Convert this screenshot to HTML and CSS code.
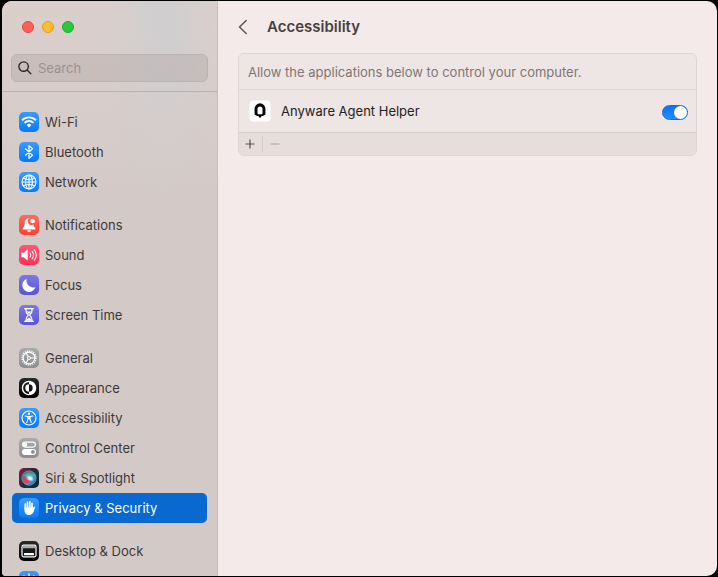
FILE: index.html
```html
<!DOCTYPE html>
<html lang="en">
<head>
<meta charset="utf-8">
<title>Accessibility</title>
<link rel="stylesheet" href="styles.css">
</head>
<body>
<div class="window">
  <aside class="sidebar">
    <div class="lights">
      <button class="light close" aria-label="Close"></button>
      <button class="light minimize" aria-label="Minimize"></button>
      <button class="light maximize" aria-label="Zoom"></button>
    </div>
    <label class="search">
      <svg width="14" height="14" viewBox="0 0 14 14" fill="none" stroke="#2c2a2a" stroke-width="1.4" stroke-linecap="round"><circle cx="5.6" cy="5.6" r="4.7"/><path d="M9.1 9.1l3.7 3.7"/></svg>
      <input type="search" placeholder="Search" aria-label="Search">
    </label>
    <nav class="list">
      <div class="group">
        <a class="item" href="#"><svg class="icon blue" viewBox="0 0 20 20" fill="none" stroke="#fff" stroke-width="1.9"><path d="M3 8.2a10 10 0 0 1 14 0M5.5 10.9a6.4 6.4 0 0 1 9 0"/><path d="M10 15.4l-2.3-2.5a3.4 3.4 0 0 1 4.6 0z" fill="#fff" stroke="none"/></svg>Wi-Fi</a>
        <a class="item" href="#"><svg class="icon blue" viewBox="0 0 20 20" fill="none" stroke="#fff" stroke-width="1.2" stroke-linejoin="round" stroke-linecap="round"><path d="M6.5 6.8l7 6.4-3.500 3.200V3.600l3.500 3.200-7 6.400"/></svg>Bluetooth</a>
        <a class="item" href="#"><svg class="icon blue" viewBox="0 0 20 20" fill="none" stroke="#fff" stroke-width="1.1"><circle cx="10" cy="10" r="7"/><ellipse cx="10" cy="10" rx="3.4" ry="7"/><path d="M10 3v14M3 10h14M4.300 6.200c3.500 1.600 7.900 1.600 11.400 0M4.300 13.800c3.500-1.600 7.900-1.600 11.400 0"/></svg>Network</a>
      </div>
      <div class="group">
        <a class="item" href="#"><svg class="icon red" viewBox="0 0 20 20" fill="#fff"><path d="M10.500 3.300C7.500 3 5.800 5 5.700 7.800c-.1 3-.5 3.900-1.900 5.200-.6.600-.3 1.400.5 1.400h11.400c.8 0 1.100-.8.500-1.400-1-1-1.600-1.800-1.800-3.500a3.400 3.400 0 0 1-3.900-6.200zM8 15.200h4a2 2 0 0 1-4 0z"/><circle cx="13.600" cy="6" r="2.300"/></svg>Notifications</a>
        <a class="item" href="#"><svg class="icon pink" viewBox="0 0 20 20" fill="none" stroke="#fff" stroke-width="1.1" stroke-linecap="round"><path d="M2.700 8v4h2l3.700 3.100V4.900L4.700 8z" fill="#fff" stroke-linejoin="round" stroke-width=".6"/><path d="M11 8a3.500 3.500 0 0 1 0 4M13.200 6.300a6.200 6.200 0 0 1 0 7.400M15.400 4.700a9 9 0 0 1 0 10.600"/></svg>Sound</a>
        <a class="item" href="#"><svg class="icon indigo" viewBox="0 0 20 20" fill="#fff"><path d="M7.700 3.900A6.700 6.700 0 1 0 16.400 12.300 7 7 0 0 1 7.700 3.900z"/></svg>Focus</a>
        <a class="item" href="#"><svg class="icon indigo" viewBox="0 0 20 20" fill="none" stroke="#fff" stroke-width="1.3" stroke-linecap="round"><path d="M5.600 3.700h8.800M5.600 16.300h8.800M6.800 4c0 3.500.8 4.400 2.300 5.500v1c-1.500 1.100-2.300 2-2.300 5.500M13.200 4c0 3.500-.8 4.400-2.300 5.500v1c1.500 1.100 2.300 2 2.300 5.500"/><path d="M7.600 6.600h4.800L10 9zM7.200 15.700c.2-1.700 1.600-2.300 2.800-3.200 1.200.9 2.600 1.500 2.800 3.200z" fill="#fff" stroke="none"/></svg>Screen Time</a>
      </div>
      <div class="group">
        <a class="item" href="#"><svg class="icon gray" viewBox="0 0 20 20" fill="none" stroke="#fff"><circle cx="10" cy="10" r="7" stroke-width="1.400" stroke-dasharray="1.200 1"/><circle cx="10" cy="10" r="5.900" stroke-width="1.200"/><path d="M11.500 10H16M9.200 8.700L7 4.900M9.200 11.300L7 15.100" stroke-width="1.100"/><circle cx="10" cy="10" r="1.500" stroke-width="1"/></svg>General</a>
        <a class="item" href="#"><svg class="icon black" viewBox="0 0 20 20"><circle cx="10" cy="10" r="6.600" fill="none" stroke="#fff" stroke-width="1.400"/><path d="M10 3.400a6.600 6.600 0 0 1 0 13.200v-2.900a3.700 3.700 0 0 0 0-7.400zM10 6.300a3.700 3.700 0 0 0 0 7.400z" fill="#fff"/></svg>Appearance</a>
        <a class="item" href="#"><svg class="icon blue" viewBox="0 0 20 20" fill="none" stroke="#fff" stroke-linecap="round"><circle cx="10" cy="10" r="7" stroke-width="1.2"/><circle cx="10" cy="5.800" r="1.200" fill="#fff" stroke="none"/><path d="M6.300 8l2.600.6v2.500L7.800 14.700M13.700 8l-2.600.6v2.500l1.100 3.600M9 8.600h2" stroke-width="1.100" stroke-linejoin="round"/><path d="M8.900 8.400h2.200v3H8.900z" fill="#fff" stroke="none"/></svg>Accessibility</a>
        <a class="item" href="#"><svg class="icon gray" viewBox="0 0 20 20"><rect x="3.600" y="4.100" width="12.800" height="5" rx="2.500" fill="none" stroke="#fff" stroke-width="1.100"/><circle cx="6.100" cy="6.600" r="2.200" fill="#fff"/><rect x="3" y="10.900" width="14" height="6" rx="3" fill="#fff"/><circle cx="13.900" cy="13.900" r="1.900" fill="#8f8f93"/></svg>Control Center</a>
        <a class="item" href="#"><svg class="icon siri" viewBox="0 0 20 20"><defs><linearGradient id="orb" x1="0" y1="0" x2="1" y2="1"><stop offset="0" stop-color="#5f6a78"/><stop offset=".4" stop-color="#56808e"/><stop offset=".6" stop-color="#4a9fc2"/><stop offset="1" stop-color="#2c58b0"/></linearGradient><radialGradient id="glow"><stop offset="0" stop-color="#fff"/><stop offset=".4" stop-color="#eafcff" stop-opacity=".8"/><stop offset="1" stop-color="#afd" stop-opacity="0"/></radialGradient></defs><circle cx="10" cy="10" r="7.500" fill="url(#orb)"/><path d="M4 8c3-4 9-4 12 0-4-1-5 4-7 2.500S6 7 4 8z" fill="#44d4bd" opacity=".55"/><path d="M3.500 12c3-4 6-2 8 0-1 4-6 5-8 0z" fill="#e33b67" opacity=".9"/><ellipse cx="11" cy="10.300" rx="4.600" ry="3.200" transform="rotate(25 11 10.300)" fill="url(#glow)"/><circle cx="10" cy="10" r="7.300" fill="none" stroke="#8fb0bd" stroke-opacity=".5" stroke-width=".6"/></svg>Siri &amp; Spotlight</a>
        <a class="item selected" href="#" aria-current="page"><svg class="icon blue" viewBox="0 0 20 20" fill="none" stroke="#fff" stroke-linecap="round" stroke-width="1.700"><path d="M6.300 6v5M8.500 4.300v6M10.800 3.800v6M13 5.400v6M15.300 9.400l-1.800 3.800"/><path d="M5.500 9.500h8.300v2.700l1.600-1c-.8 3.200-2.200 5.800-5.100 5.800-3.200 0-4.800-2.200-4.800-5.100z" fill="#fff" stroke="none"/></svg>Privacy &amp; Security</a>
      </div>
      <div class="group">
        <a class="item" href="#"><svg class="icon black" viewBox="0 0 20 20"><rect x="3" y="4.200" width="14" height="11.600" rx="1.500" fill="#171717" stroke="#fff" stroke-width="1.200"/><path d="M4 5h12v2.200H4z" fill="#aaa"/><rect x="5" y="12" width="10" height="2.300" rx=".6" fill="#fff"/></svg>Desktop &amp; Dock</a>
        <a class="item" href="#" aria-label="Displays"><svg class="icon blue" viewBox="0 0 20 20" fill="none" stroke="#fff" stroke-width="1.3" stroke-linecap="round"><circle cx="10" cy="10" r="3.400" fill="#fff"/><path d="M10 3v1.500M10 15.500V17M3 10h1.500M15.500 10H17M5 5l1.100 1.100M13.900 13.900L15 15M15 5l-1.100 1.100M6.100 13.900L5 15"/></svg></a>
      </div>
    </nav>
  </aside>
  <main class="content">
    <header class="title">
      <button class="back" aria-label="Back"><svg width="10" height="16" viewBox="0 0 10 16" fill="none" stroke="#5f5959" stroke-width="1.6" stroke-linecap="round" stroke-linejoin="round"><path d="M8.200 1.500L1.500 8l6.700 6.500"/></svg></button>
      <h1>Accessibility</h1>
    </header>
    <section class="panel">
      <p class="hint">Allow the applications below to control your computer.</p>
      <div class="app">
        <svg class="app-icon" viewBox="0 0 22 22"><rect x="0.500" y="0.500" width="21" height="21" rx="4" fill="#fff"/><path d="M5.600 14.500V8.700a5.400 5.400 0 0 1 10.800 0v5.800l-2.500 1.500h-1.200L11 18.200 9.300 16H8.100zM8.500 9v4.500l.8.800h3.400l.8-.8V9a2.500 2.500 0 0 0-5 0z" fill="#080808" fill-rule="evenodd"/></svg>
        <label for="helper">Anyware Agent Helper</label>
        <input class="switch" id="helper" type="checkbox" role="switch" checked>
      </div>
      <footer class="actions">
        <button aria-label="Add"><svg width="10" height="10" viewBox="0 0 10 10" stroke="#544f4f" stroke-width="1.2"><path d="M.5 5h9M5 .5v9"/></svg></button>
        <span class="split"></span>
        <button aria-label="Remove" disabled><svg width="10" height="10" viewBox="0 0 10 10" stroke="#aaa2a2" stroke-width="1.2"><path d="M.5 5h9"/></svg></button>
      </footer>
    </section>
  </main>
</div>
</body>
</html>
```
FILE: styles.css
```css
* {
  box-sizing: border-box;
}

body {
  margin: 0;
  height: 100vh;
  padding: 1px 1px 1px 2px;
  background: #000;
  font: 13px/16px Inter, "Liberation Sans", sans-serif;
  color: #3d3939;
}

button {
  padding: 0;
  border: 0;
  background: none;
}

svg {
  display: block;
  flex: none;
}

.window {
  display: flex;
  height: 100%;
  overflow: hidden;
  border-radius: 10px 10px 10px 4px;
  background: #f4eae9;
}

.sidebar {
  display: flex;
  flex: none;
  flex-direction: column;
  width: 216px;
  border-right: 1px solid #c6bebd;
  background:
    radial-gradient(60px 170px at 75% 20px, #cfced0, transparent),
    linear-gradient(#dbcfcc, #d3cac8 200px);
}

.lights {
  display: flex;
  gap: 8px;
  padding: 20px 20px 0;
}

.light {
  width: 12px;
  height: 12px;
  border: 1px solid;
  border-radius: 50%;
}

.close {
  border-color: #e2463f;
  background: #ff5f57;
}

.minimize {
  border-color: #dfa023;
  background: #febc2e;
}

.maximize {
  border-color: #1dad2b;
  background: #28c840;
}

.search {
  display: flex;
  flex: none;
  align-items: center;
  gap: 6px;
  height: 28px;
  margin: 21px 9px 9px;
  padding: 0 6px;
  border: 1px solid #bbb3b2;
  border-radius: 6px;
  background: rgba(100, 85, 85, 0.13);
}

.search input {
  flex: 1;
  min-width: 0;
  padding: 0;
  border: 0;
  outline: 0;
  background: none;
  font: inherit;
  color: inherit;
}

.search input::placeholder {
  color: #999190;
}

.list {
  display: flex;
  flex: 1;
  flex-direction: column;
  gap: 13px;
  min-height: 0;
  overflow: hidden;
  padding: 15px 10px 0;
  border-top: 1px solid #b9b1b0;
}

.item {
  display: flex;
  align-items: center;
  gap: 6px;
  height: 30px;
  padding: 0 7px;
  border-radius: 5px;
  color: inherit;
  text-decoration: none;
  white-space: nowrap;
}

.selected {
  background: #0969d0;
  color: #fff;
}

.icon {
  width: 20px;
  height: 20px;
  border-radius: 5px;
}

.blue {
  background: linear-gradient(#3b9aff, #067aff);
}

.red {
  background: linear-gradient(#ff6a61, #ff3e33);
}

.pink {
  background: linear-gradient(#ff5877, #ff2f56);
}

.indigo {
  background: linear-gradient(#7c79e4, #5855d3);
}

.gray {
  background: linear-gradient(#aaaaad, #8e8e92);
}

.black {
  background: linear-gradient(#292929, #000);
}

.siri {
  background: linear-gradient(120deg, #8a2049, #2d2636 45%, #0a3a47 65%, #121a25);
}

.content {
  flex: 1;
  min-width: 0;
  padding: 0 20px;
}

.title {
  display: flex;
  align-items: center;
  gap: 19px;
  height: 52px;
}

h1 {
  margin: 0;
  font-size: 15px;
  font-weight: 600;
  line-height: 20px;
  color: #464141;
}

.panel {
  overflow: hidden;
  border: 1px solid #ded5d4;
  border-radius: 6px;
  background: #eee6e4;
}

.hint {
  margin: 0;
  padding: 10px 9px 9px;
  color: #7d7676;
}

.app {
  display: flex;
  align-items: center;
  height: 43px;
  padding: 0 8px 0 10px;
  border-top: 1px solid #dfd6d5;
  color: #232121;
}

.app-icon {
  width: 22px;
  height: 22px;
}

.app label {
  flex: 1;
  margin-left: 10px;
}

.switch {
  appearance: none;
  display: flex;
  width: 26px;
  height: 15px;
  margin: 2px 0 0;
  border: 1px solid #0871e2;
  border-radius: 8px;
  background: linear-gradient(#0873ee, #278bff);
}

.switch::before {
  content: "";
  width: 13px;
  height: 13px;
  margin-left: auto;
  border-radius: 50%;
  background: #fff;
}

.switch:not(:checked) {
  border-color: #bbb3b2;
  background: #cfc7c6;
}

.switch:not(:checked)::before {
  margin-left: 0;
}

.actions {
  display: flex;
  align-items: center;
  gap: 6px;
  height: 23px;
  padding: 0 6px;
  border-top: 1px solid #d5cccb;
  background: #e7dedc;
}

.split {
  width: 1px;
  height: 16px;
  margin: 0 1px;
  background: #d3cac9;
}
```
